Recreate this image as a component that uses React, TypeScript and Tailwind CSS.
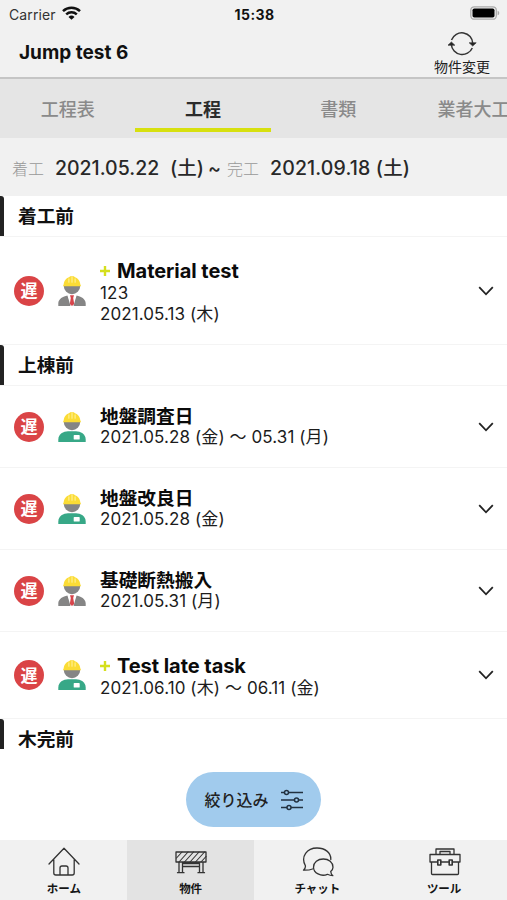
import type { ReactNode } from "react";
import clsx from "clsx";

type Role = "manager" | "worker";

interface Task {
  title: string;
  note?: string;
  date: string;
  role: Role;
  added?: boolean;
  height: string;
}

interface Section {
  name: string;
  tasks: Task[];
}

const sections: Section[] = [
  {
    name: "着工前",
    tasks: [
      {
        title: "Material test",
        note: "123",
        date: "2021.05.13 (木)",
        role: "manager",
        added: true,
        height: "h-[108px]",
      },
    ],
  },
  {
    name: "上棟前",
    tasks: [
      { title: "地盤調査日", date: "2021.05.28 (金) 〜 05.31 (月)", role: "worker", height: "h-[82px]" },
      { title: "地盤改良日", date: "2021.05.28 (金)", role: "worker", height: "h-[82px]" },
      { title: "基礎断熱搬入", date: "2021.05.31 (月)", role: "manager", height: "h-[82px]" },
      {
        title: "Test late task",
        date: "2021.06.10 (木) 〜 06.11 (金)",
        role: "worker",
        added: true,
        height: "h-[87px]",
      },
    ],
  },
  { name: "木完前", tasks: [] },
];

const WorkerIcon = ({ role }: { role: Role }) => (
  <svg className="ml-[14px] h-[30px] w-[28px] shrink-0" viewBox="0 0 28 30">
    <path d="M5.800 10a8.200 8.200 0 0 0 16.400 0Z" fill="#858585" />
    <path d="M5.700 8.600C5.700 4.500 8.500 1.800 11.500.900L12 .2h4l.5.700c3 .9 5.800 3.600 5.800 7.700l.5.400v1.200H5.200V9Z" fill="#fbdc35" />
    <path d="M10.900 2.500v4.200M17.100 2.500v4.200M14 1v5.700" stroke="#fff3a3" strokeWidth="1" />
    {role === "worker" ? (
      <>
        <path d="M.3 30v-2.500C.3 22 5.500 19.200 10 19.200h8c4.500 0 9.700 2.800 9.700 8.300V30Z" fill="#37a887" />
        <rect x="15.700" y="23" width="6" height="4.600" rx=".7" fill="#fff" />
      </>
    ) : (
      <>
        <path d="M.3 30v-2.500c0-5 4.700-7 9.200-8.100L14 29l4.500-9.600c4.500 1.100 9.200 3.100 9.200 8.100V30Z" fill="#858585" />
        <path d="M9.500 19.400h9L15.500 30h-3Z" fill="#fff" />
        <path d="M12 19.300h4l-.8 2.700 1 6-2.200 2-2.200-2 1-6Z" fill="#d7444b" />
      </>
    )}
  </svg>
);

const TaskRow = ({ title, note, date, role, added, height }: Task) => (
  <div className={clsx("flex items-center border-b border-[#f4f4f4] pl-[14px] pr-[13px]", height)}>
    <span className="flex h-[30px] w-[30px] shrink-0 items-center justify-center rounded-full bg-[#da4446] pt-[2px] text-[17px] font-bold leading-none text-white">
      遅
    </span>
    <WorkerIcon role={role} />
    <div className="ml-[14px] grow whitespace-nowrap pt-[2px] text-[#1c1c1c]">
      <div
        className={clsx(
          "flex items-center font-bold text-[#0b0b0b]",
          added ? "h-[24px] text-[20px] tracking-[-0.05px]" : "h-[20px] text-[18.700px]",
        )}
      >
        {added && (
          <svg className="mr-[7px] h-[10px] w-[10px]" viewBox="0 0 10 10">
            <path d="M5 0v10M0 5h10" stroke="#d5df1d" strokeWidth="2.400" />
          </svg>
        )}
        {title}
      </div>
      {note && <div className="text-[17px] leading-[21px] tracking-[0.200px]">{note}</div>}
      <div className="text-[17px] leading-[21px] tracking-[0.090px]">{date}</div>
    </div>
    <svg className="h-[10px] w-[16px] shrink-0" viewBox="0 0 16 10" fill="none" stroke="#222" strokeWidth="1.800">
      <path d="M1.200 1.200 8 8.300l6.800-7.100" />
    </svg>
  </div>
);

const tabs = ["工程表", "工程", "書類", "業者大工"];

const NavItem = ({ label, active, children }: { label: string; active?: boolean; children: ReactNode }) => (
  <button
    className={clsx(
      "flex flex-1 flex-col items-center pt-[6px] text-[11.500px] font-bold text-[#151515]",
      active && "bg-[#e3e3e3]",
    )}
  >
    <svg className="ml-[2px] h-[32px] w-[32px]" viewBox="0 0 32 32" fill="none" stroke="#333" strokeWidth="1.300" strokeLinecap="round" strokeLinejoin="round">
      {children}
    </svg>
    <span className="ml-px mt-[3px] leading-[16px]">{label}</span>
  </button>
);

const App = () => (
  <div className="flex h-[900px] w-[507px] flex-col overflow-hidden bg-white font-['Inter','Noto_Sans_CJK_JP',sans-serif] text-[#111]">
    {/* Status bar */}
    <div className="flex h-[28px] shrink-0 items-center justify-between bg-[#f1f1f1] pl-[9px] pr-[7px]">
      <div className="flex flex-1 items-center gap-[6px] text-[14px] tracking-[0.100px] text-[#333]">
        Carrier
        <svg className="-mt-[3px] h-[14px] w-[19px]" viewBox="0 0 19 14" fill="none" stroke="#111" strokeWidth="2.500">
          <path d="M1 5.200a12.300 12.300 0 0 1 17 0M4.200 8.400a7.800 7.800 0 0 1 10.600 0" />
          <path d="M9.500 13.800 6.500 10.900a4.300 4.300 0 0 1 6 0Z" fill="#111" stroke="none" />
        </svg>
      </div>
      <div className="text-[14px] font-bold tracking-[0.400px]">15:38</div>
      <div className="flex flex-1 justify-end">
        <svg className="-mt-[2px] h-[14px] w-[30px]" viewBox="0 0 30 14">
          <rect x=".8" y=".8" width="25.500" height="12.400" rx="3.500" fill="#f1f1f1" stroke="#aaa" strokeWidth="1.300" />
          <rect x="2.500" y="2.500" width="22" height="9" rx="1.800" fill="#000" />
          <path d="M27.600 4.700c2.200.6 2.200 4 0 4.600Z" fill="#aaa" />
        </svg>
      </div>
    </div>

    <header className="flex h-[51px] shrink-0 items-start justify-between border-b-2 border-[#c5c5c5] bg-[#f1f1f1] pl-[19px] pr-[17px]">
      <h1 className="pt-[11px] text-[19px] font-bold leading-[27px]">Jump test 6</h1>
      <button className="flex flex-col items-center pt-[3px] text-[14px] leading-[18px] text-[#222]">
        <svg className="h-[26px] w-[30px]" viewBox="0 0 30 26" fill="none" stroke="#333" strokeWidth="1.500">
          <path d="M4.500 9A11 11 0 0 1 25.800 12.500M25.300 17A11 11 0 0 1 4.300 13.500" />
          <path d="m22.200 11.800 3.500 3.200 3.500-3.200ZM1 14.200l3.400-3.200 3.400 3.200Z" fill="#222" strokeWidth=".7" />
        </svg>
        <span className="mt-[1px]">物件変更</span>
      </button>
    </header>

    <nav className="flex h-[59px] shrink-0 bg-[#e5e5e5] text-[18px] font-medium text-[#8a8a8a]">
      {tabs.map((tab) => (
        <button
          key={tab}
          className={clsx(
            "flex h-[53px] w-[135.300px] shrink-0 items-center justify-center whitespace-nowrap border-b-4 pt-[12px]",
            tab === "工程" ? "border-[#d7e00f] font-bold text-[#2b2b2b]" : "border-transparent",
          )}
        >
          {tab}
        </button>
      ))}
    </nav>

    <div className="flex h-[58px] shrink-0 items-center whitespace-nowrap bg-[#f1f1f1] pl-[12px] pt-[3px] text-[19.500px] font-medium text-[#282828]">
      <span className="w-[43px] text-[16px] font-light text-[#999]">着工</span>
      <span className="w-[115px]">2021.05.22</span>
      <span className="w-[38px]">(土)</span>
      <span className="w-[19px]">~</span>
      <span className="w-[43px] text-[16px] font-light text-[#999]">完工</span>
      <span className="tracking-[0.150px]">2021.09.18 (土)</span>
    </div>

    <main className="h-[552px] shrink-0">
      {sections.map(({ name, tasks }) => (
        <section key={name}>
          <h2
            className={clsx(
              "flex text-[18.700px] font-bold leading-[40px]",
              tasks.length > 0 ? "h-[41px] border-b border-[#f4f4f4]" : "h-[30px]",
            )}
          >
            <span
              className={clsx("mr-[14px] w-[4px] rounded-tr-[3px] bg-[#222]", tasks.length > 0 ? "h-[40px]" : "h-[30px]")}
            />
            <span className="pt-px">{name}</span>
          </h2>
          {tasks.map((task) => (
            <TaskRow key={task.title} {...task} />
          ))}
        </section>
      ))}
    </main>

    <div className="flex grow items-start justify-center pt-[24px]">
      <button className="flex h-[55px] w-[135px] items-center justify-center gap-[12px] rounded-full bg-[#a1cbed] text-[16px] font-medium text-[#222]">
        絞り込み
        <svg className="h-[22px] w-[22px]" viewBox="0 0 22 22" fill="none" stroke="#223140" strokeWidth="1.500">
          <path d="M0 3.500h3.500M7.500 3.500H22M0 11h13.500M17.500 11H22M0 18.500h6M10 18.500h12" />
          <circle cx="5.500" cy="3.500" r="2" />
          <circle cx="15.500" cy="11" r="2" />
          <circle cx="8" cy="18.500" r="2" />
        </svg>
      </button>
    </div>

    <footer className="flex h-[60px] shrink-0 bg-[#f1f1f1]">
      <NavItem label="ホーム">
        <path d="M1 18 16 2.200 31 18M5.800 14v13q0 2 2 2h16.400q2 0 2-2V14M12 29v-7q0-2 2-2h4q2 0 2 2v7" />
      </NavItem>
      <NavItem label="物件" active>
        <path d="M1 6h30v10H1ZM4 16.500v9.500M7.500 16.500v9.500M24.500 16.500v9.500M28 16.500v9.500M2.500 26.700h6.500M23 26.700h6.500M8 17.500h16M8 20.500h16" />
        <path d="m1.500 12 5.500-6M4 16l9-10M9.500 16l9-10M15 16l9-10M20.500 16l9-10M26 16l5-5.500" strokeWidth="1.100" />
      </NavItem>
      <NavItem label="チャット">
        <path d="M10.500 23c-2 .8-5.500 1.300-9 1.200 1.600-1.500 2.200-3.200 1.800-4.700C-1.500 10.500 5 2 15 2c8 0 14 4.500 13.800 11.500" />
        <path d="M28.700 25.500c.2 1.800 1.200 3.500 2.200 4.200-2.500 0-4-.6-5.500-1.400C19 31 11.500 27 11.500 21.200c0-4.700 4.300-8.200 9.800-8.200s9.700 3.500 9.700 8.200c0 1.800-1 3.200-2.300 4.300Z" />
      </NavItem>
      <NavItem label="ツール">
        <path d="M1 8.500h30v7.500H1ZM2.500 16v11.500q0 1 1 1h25q1 0 1-1V16M7 8.500V3h18v5.500M11 8.500V5.500h10v3" />
        <path d="M8.800 14h3v5h-3ZM20.200 14h3v5h-3Z" fill="#f1f1f1" strokeWidth="1.600" />
      </NavItem>
    </footer>
  </div>
);

export default App;
